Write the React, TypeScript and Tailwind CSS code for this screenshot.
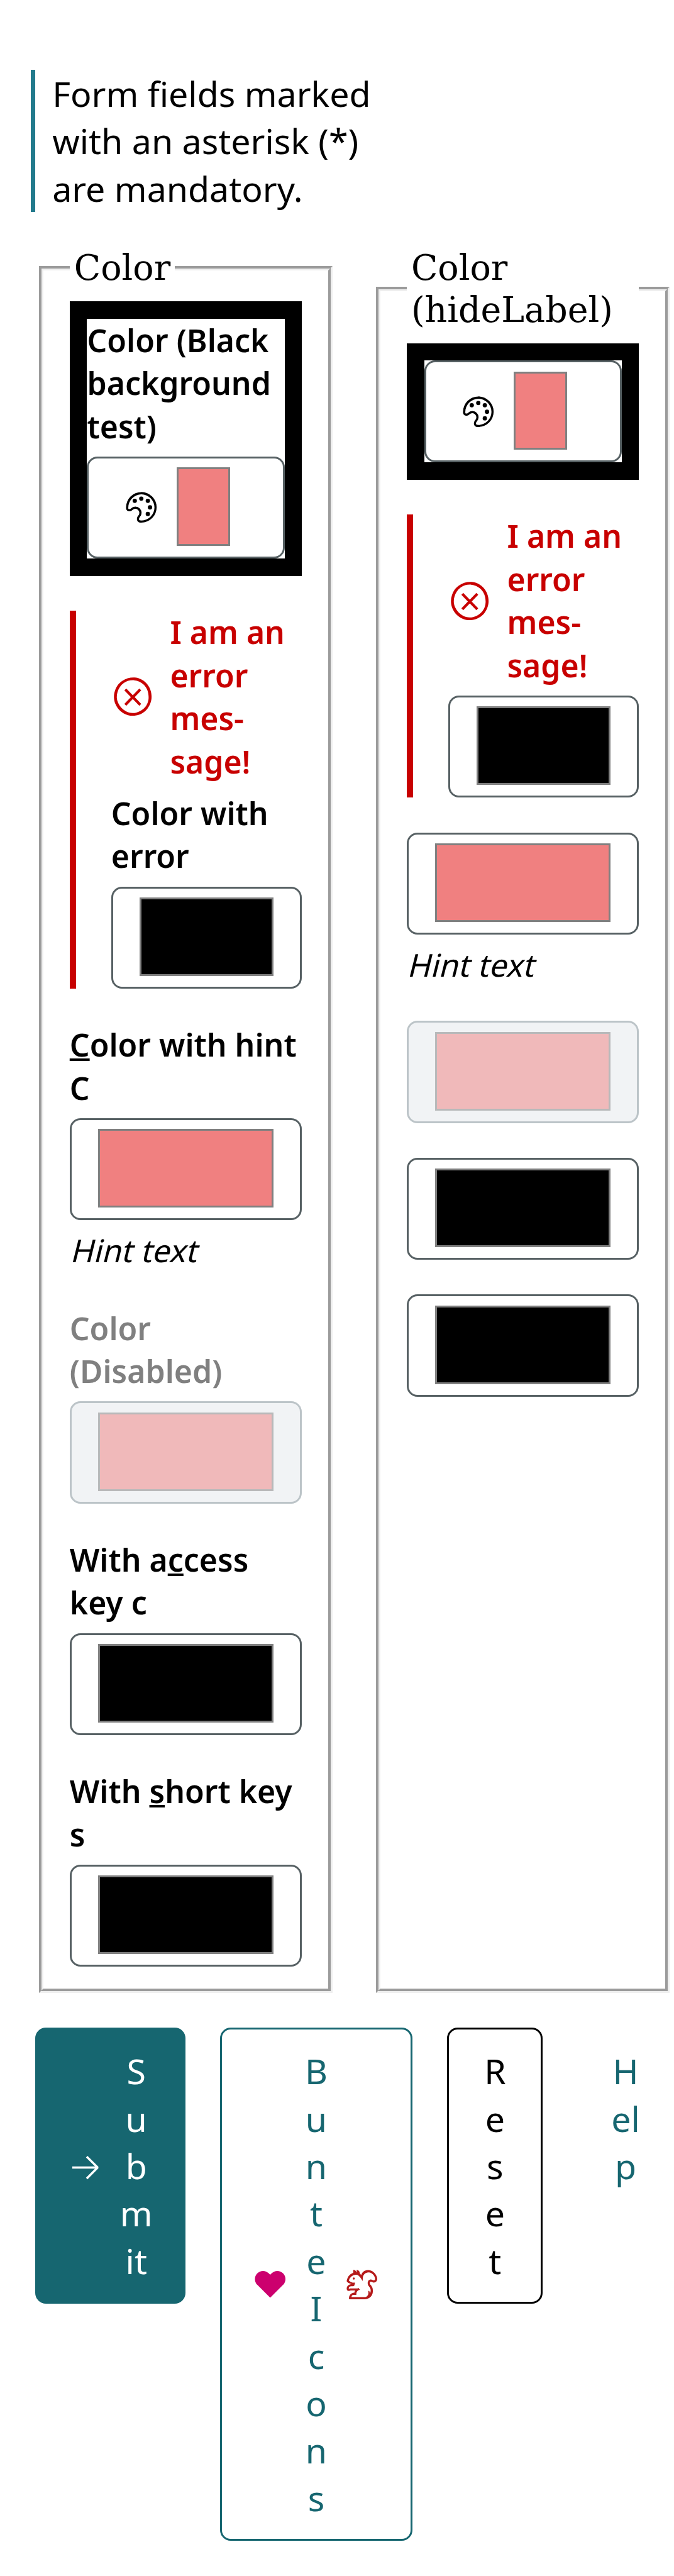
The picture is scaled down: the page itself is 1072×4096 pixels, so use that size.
import type { ReactNode } from 'react';
import {
  VscArrowRight,
  VscError,
  VscHeartFilled,
  VscSquirrel,
  VscSymbolColor,
} from 'react-icons/vsc';

function Label({ children, disabled }: { children: ReactNode; disabled?: boolean }) {
  return (
    <div
      className={
        'mb-[13.87px] text-[49.92px] leading-[68.46px] font-semibold whitespace-nowrap ' +
        (disabled ? 'text-[#808080]' : 'text-black')
      }
    >
      {children}
    </div>
  );
}

type FieldProps = { color: 'coral' | 'black'; disabled?: boolean; icon?: boolean };

function ColorInput({ color, disabled, icon }: FieldProps) {
  return (
    <div
      className={
        'flex h-[162.06px] w-full rounded-[17px] border-[3px] pt-[14.3px] ' +
        (icon ? 'pl-[55.9px] ' : 'px-[42px] ') +
        (disabled ? 'border-[#bcc4c8] bg-[#f1f3f5]' : 'border-[#576164] bg-white')
      }
    >
      {icon && <VscSymbolColor className="mt-[36px] mr-[27.7px] size-[55.46px] shrink-0 text-black" />}
      <div
        className={
          'h-[124.8px] border-[3px] border-[#808080] ' +
          (icon ? 'w-[85.8px] ' : 'w-full ') +
          (disabled ? 'opacity-50 ' : '') +
          (color === 'coral' ? 'bg-[#f08080]' : 'bg-black')
        }
      />
    </div>
  );
}

function ErrorField({ label }: { label?: ReactNode }) {
  return (
    <div className="border-l-[10px] border-[#c80000] pl-[56px]">
      <div className="mb-[13.87px] flex items-center text-[#c80000]">
        <VscError className="size-[69.3px] shrink-0" />
        <div className="ml-[24.3px] text-[49.92px] leading-[68.46px] font-semibold whitespace-nowrap">
          I am an
          <br />
          error
          <br />
          mes-
          <br />
          sage!
        </div>
      </div>
      {label && <Label>{label}</Label>}
      <ColorInput color="black" />
    </div>
  );
}

/* Slanted upright face: keeps the regular letter widths. */
function Hint() {
  return (
    <div className="mt-[13.87px] origin-[0_53.5px] -skew-x-[14deg] text-[49.92px] leading-[68.46px]">
      Hint text
    </div>
  );
}

function Group({ title, children }: { title: string; children: ReactNode }) {
  return (
    <fieldset className="w-[466.8px] min-w-0 shrink-0 border-[7px] border-[ThreeDFace] px-[41.6px] pt-[19.5px] pb-[34.6px] [border-style:groove]">
      <legend className="px-[7px] font-['DejaVu_Serif',serif] text-[55.46px] leading-[66.5px]">
        {title}
      </legend>
      <div className="flex flex-col gap-[55.46px]">{children}</div>
    </fieldset>
  );
}

function Letters({ rows }: { rows: string[] }) {
  return (
    <span className="flex flex-col items-center text-[55.46px] leading-[75.4px]">
      {rows.map((row, i) => (
        <span key={i}>{row}</span>
      ))}
    </span>
  );
}

export default function App() {
  return (
    <div className="h-[4096px] w-[1072px] overflow-hidden bg-white pt-[110.9px] font-['Noto_Sans',sans-serif] text-black">
      <div className="ml-[48.5px] w-[600px] border-l-[7px] border-[#227a8c] pl-[27.7px] text-[55.46px] leading-[75.4px]">
        Form fields marked
        <br />
        with an asterisk (*)
        <br />
        are mandatory.
      </div>

      <div className="mt-[56px] ml-[62.2px] flex gap-[69.3px]">
        <Group title="Color">
          <div className="bg-black p-[27.7px]">
            <div className="bg-white">
              <Label>
                Color (Black
                <br />
                background
                <br />
                test)
              </Label>
              <ColorInput color="coral" icon />
            </div>
          </div>
          <ErrorField
            label={
              <>
                Color with
                <br />
                error
              </>
            }
          />
          <div>
            <Label>
              <u>C</u>olor with hint
              <br />C
            </Label>
            <ColorInput color="coral" />
            <Hint />
          </div>
          <div>
            <Label disabled>
              Color
              <br />
              (Disabled)
            </Label>
            <ColorInput color="coral" disabled />
          </div>
          <div>
            <Label>
              With a<u>c</u>cess
              <br />
              key c
            </Label>
            <ColorInput color="black" />
          </div>
          <div>
            <Label>
              With <u>s</u>hort key
              <br />s
            </Label>
            <ColorInput color="black" />
          </div>
        </Group>

        <Group title="Color (hideLabel)">
          <div className="bg-black p-[27.7px]">
            <div className="bg-white">
              <ColorInput color="coral" icon />
            </div>
          </div>
          <ErrorField />
          <div>
            <ColorInput color="coral" />
            <Hint />
          </div>
          <ColorInput color="coral" disabled />
          <ColorInput color="black" />
          <ColorInput color="black" />
        </Group>
      </div>

      <div className="mt-[55.3px] ml-[55.5px] flex items-start gap-[55.5px]">
        <button className="flex h-[439.5px] w-[239.2px] shrink-0 items-center justify-between rounded-[17px] bg-[#166670] px-[52px] text-white">
          <VscArrowRight className="mt-[2px] size-[55.46px] shrink-0" />
          <Letters rows={['S', 'u', 'b', 'm', 'it']} />
        </button>
        <button className="flex h-[816.4px] w-[305.6px] shrink-0 items-center justify-between rounded-[17px] border-[3px] border-[#166670] px-[49px] text-[#166670]">
          <VscHeartFilled className="size-[55.46px] shrink-0 text-[#cc006e]" />
          <Letters rows={['B', 'u', 'n', 't', 'e', 'I', 'c', 'o', 'n', 's']} />
          <VscSquirrel className="size-[55.46px] shrink-0 text-[#b51a1a]" />
        </button>
        <button className="flex h-[439.5px] w-[152.2px] shrink-0 items-center justify-center rounded-[17px] border-[3px] border-black">
          <Letters rows={['R', 'e', 's', 'e', 't']} />
        </button>
        <button className="flex w-[152px] shrink-0 justify-center pt-[31.2px] text-[#166670]">
          <Letters rows={['H', 'el', 'p']} />
        </button>
      </div>
    </div>
  );
}
